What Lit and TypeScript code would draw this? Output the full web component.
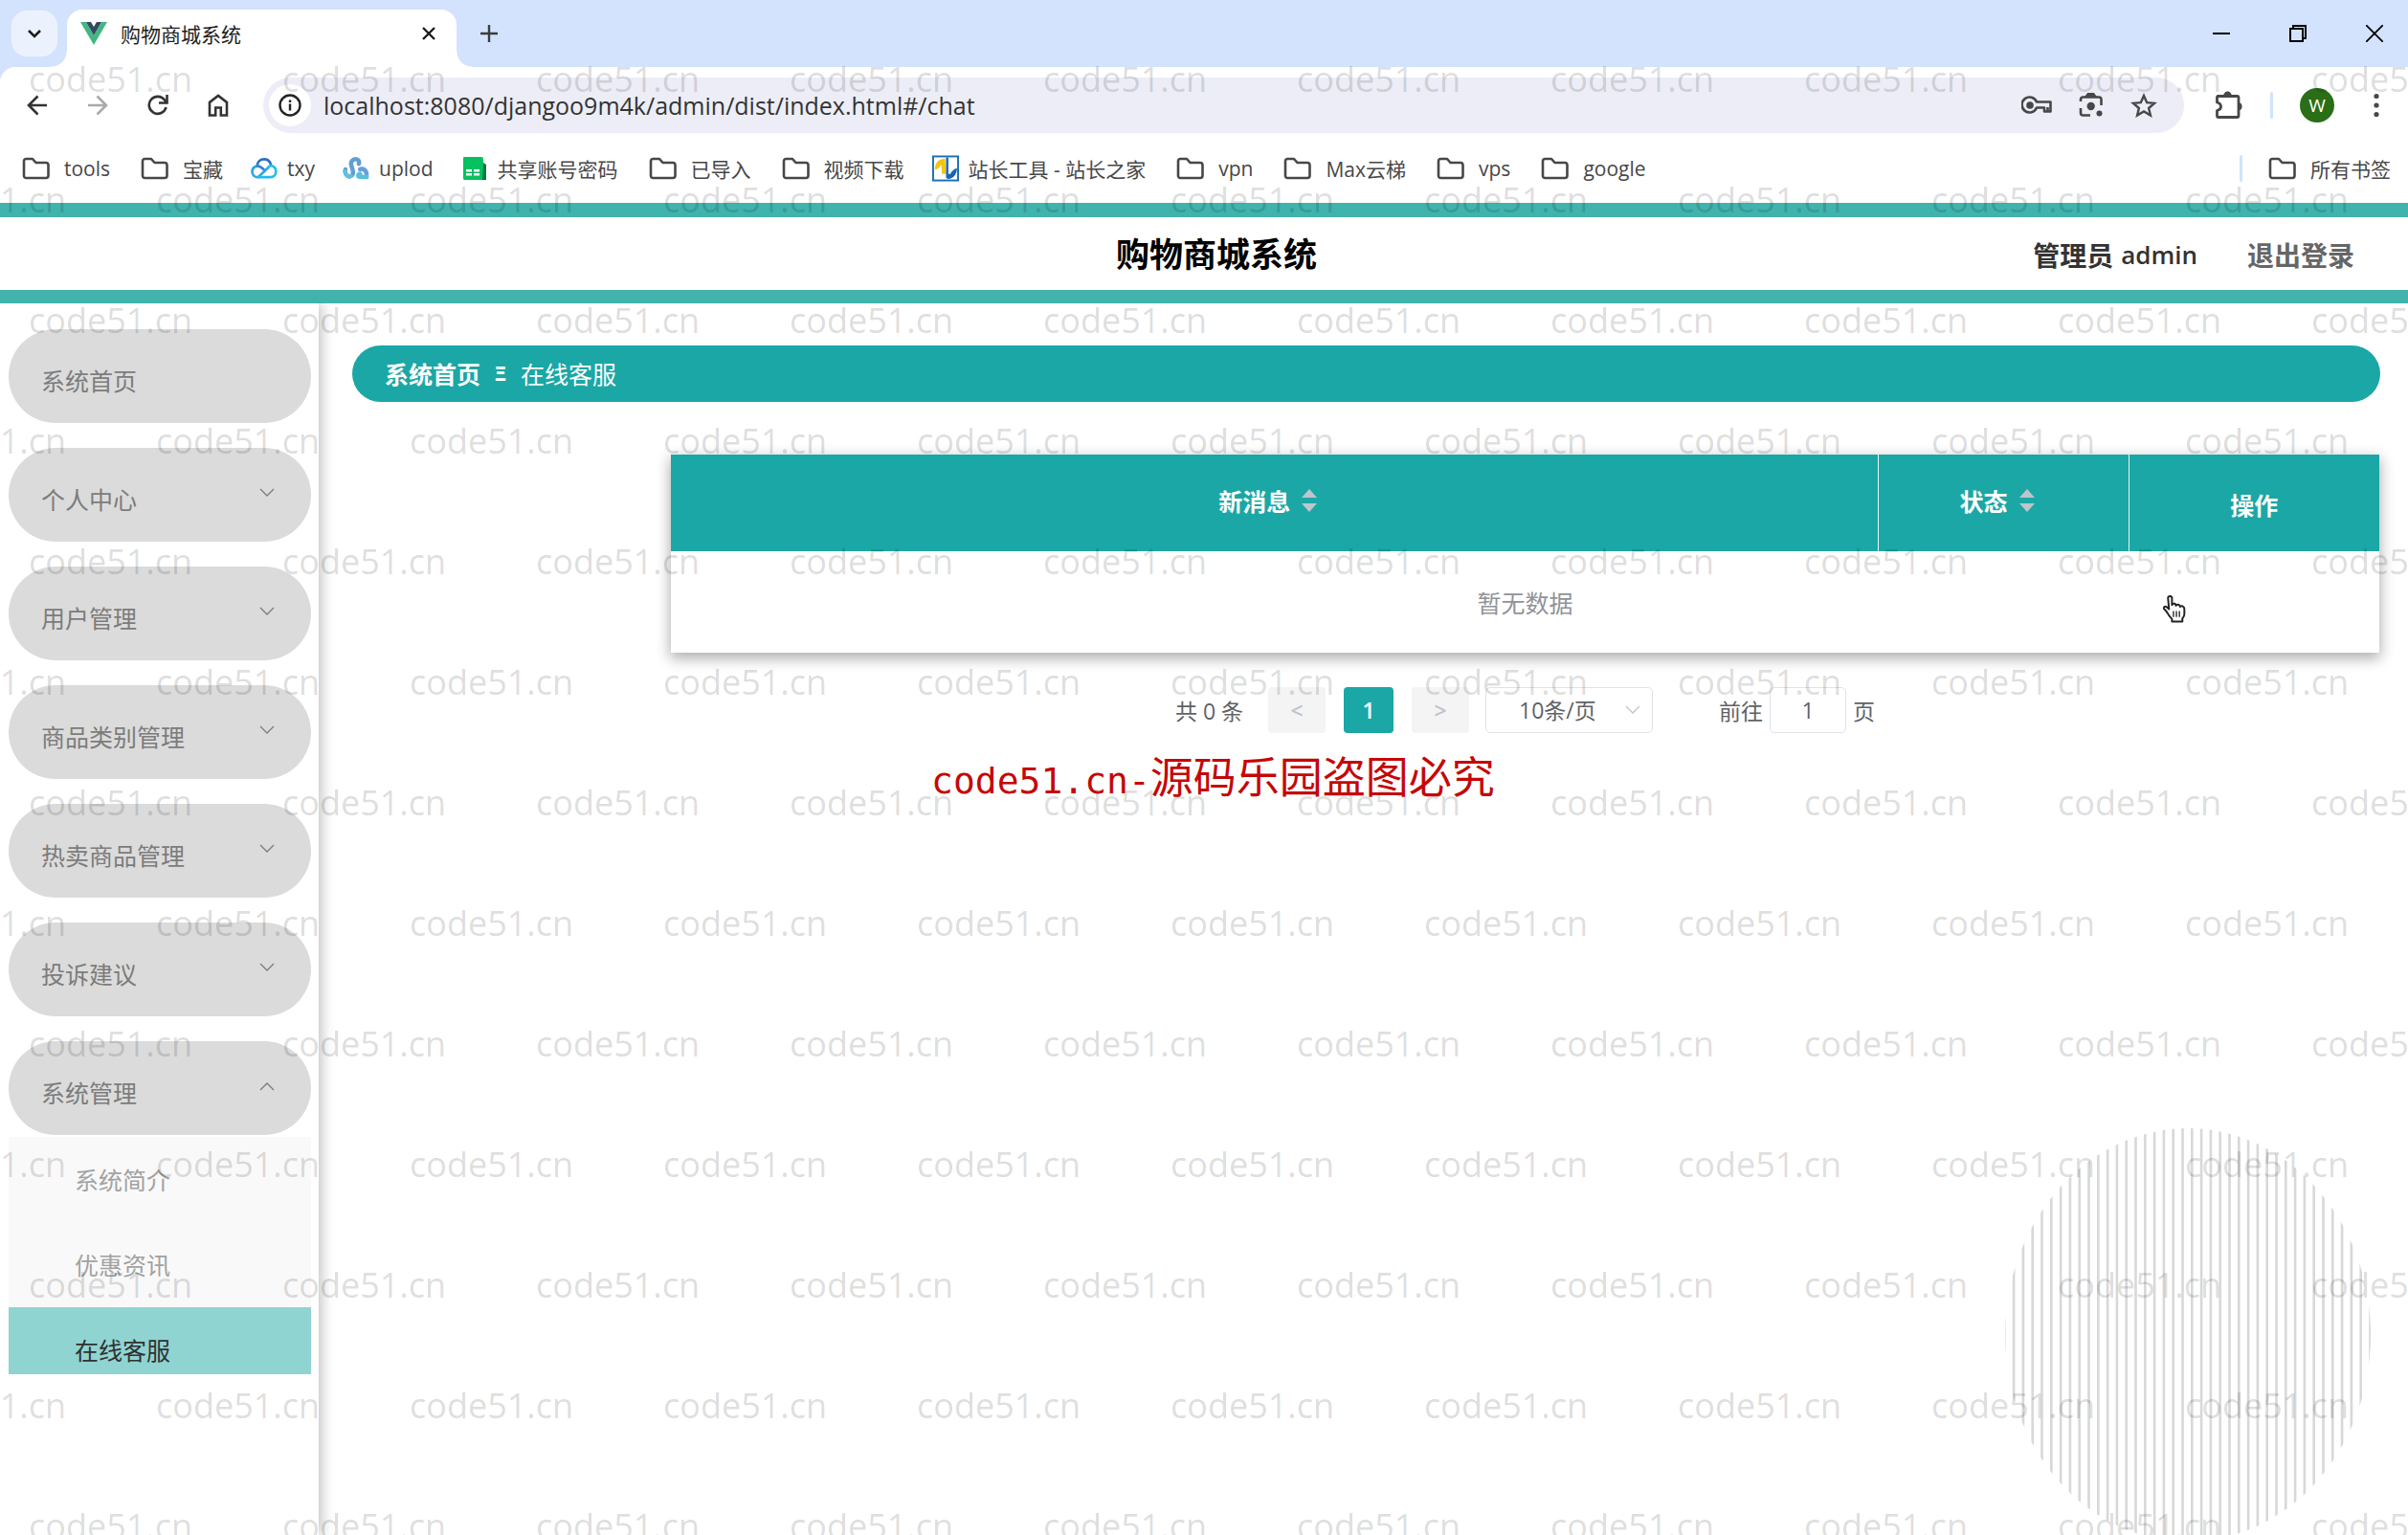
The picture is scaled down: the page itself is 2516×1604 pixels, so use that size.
import { LitElement, html, css, svg, TemplateResult } from "lit";
import { customElement, property } from "lit/decorators.js";

type Bookmark = { label: string; icon: "folder" | "cloud" | "swirl" | "sheet" | "zz" };
type MenuEntry = { label: string; state: "none" | "closed" | "open"; children?: string[] };

const BOOKMARKS: Bookmark[] = [
  { label: "tools", icon: "folder" },
  { label: "宝藏", icon: "folder" },
  { label: "txy", icon: "cloud" },
  { label: "uplod", icon: "swirl" },
  { label: "共享账号密码", icon: "sheet" },
  { label: "已导入", icon: "folder" },
  { label: "视频下载", icon: "folder" },
  { label: "站长工具 - 站长之家", icon: "zz" },
  { label: "vpn", icon: "folder" },
  { label: "Max云梯", icon: "folder" },
  { label: "vps", icon: "folder" },
  { label: "google", icon: "folder" },
];

const MENU: MenuEntry[] = [
  { label: "系统首页", state: "none" },
  { label: "个人中心", state: "closed" },
  { label: "用户管理", state: "closed" },
  { label: "商品类别管理", state: "closed" },
  { label: "热卖商品管理", state: "closed" },
  { label: "投诉建议", state: "closed" },
  { label: "系统管理", state: "open", children: ["系统简介", "优惠资讯", "在线客服"] },
];

const ICONS: Record<string, TemplateResult> = {
  folder: html`<svg width="30" height="24" viewBox="0 0 30 24" fill="none" stroke="#474747" stroke-width="2.6" stroke-linejoin="round"><path d="M2 4.5Q2 2 4.5 2H11l3.500 4H25Q27.500 6 27.500 8.500V19.500Q27.500 22 25 22H4.500Q2 22 2 19.500Z"/></svg>`,
  cloud: html`<svg width="28" height="24" viewBox="0 0 29 24" fill="none" stroke-width="2.800" stroke-linecap="round"><path d="M7 9.500C7 4.500 10.500 2 14.500 2C18 2 20.500 4 21.500 7" stroke="#2a6fc4"/><path d="M7 9.500C3.500 10 1.600 12.500 1.600 15.500C1.600 19 4 21.500 8 21.500L19 11" stroke="#31a6e8"/><path d="M7 9.500C10 9 12 11 14 13" stroke="#2c86d6"/><path d="M8 21.500H21C25 21.500 27.300 18.500 27.300 15C27.300 11.500 24.500 9 21.500 9C20.500 9 19.500 10 19 11" stroke="#22bdf0"/></svg>`,
  swirl: html`<svg width="28" height="26" viewBox="0 0 29 26" fill="none" stroke-width="4.600" stroke-linecap="round"><path d="M3 14C2 19 5 22.500 8.500 21.500C13 20 11 14 9.500 10C8 5.500 11 3 14 3C17 3 18.500 5.500 17.500 8" stroke="#5f9fd0"/><path d="M2.600 16C3.500 20.500 6 22.500 9 21.300" stroke="#63bfe0"/><path d="M19 14C23 12.500 26.500 16 26 22H18C16 22 16.500 19 19 19" stroke="#58bfdc"/><path d="M19 14C22 13 25 14.500 25.800 18" stroke="#6aa0d8"/></svg>`,
  sheet: html`<svg width="28" height="26" viewBox="-1 0 28 26"><path d="M2 1H20Q22 1 22 3V25H2Q1 25 1 23V2Q1 1 2 1Z" fill="#05c160"/><path d="M22 7L25 9V25H21Z" fill="#0a7a40"/><path d="M4 14h6v2.500H4zM12 14h6v2.500h-6zM4 18h6v2.500H4zM12 18h6v2.500h-6z" fill="#fff"/></svg>`,
  zz: html`<svg width="28" height="28" viewBox="0 0 29 28"><rect x="1" y="1" width="27" height="26" fill="#fff" stroke="#1c6fb0" stroke-width="2"/><path d="M3 13Q4 4 14 3.500L15 20H10.500L10 10Q6 15 3 15.500Z" fill="#f3c412"/><path d="M15 2V24Q17 26 20 25Q26 23 27 14Q23 14 19.500 20L17.500 20V2Z" fill="#1668b4"/></svg>`,
  back: html`<svg width="22" height="22" viewBox="0 0 22 22" fill="none" stroke="#333" stroke-width="2.600"><path d="M21 11H3M11.500 1.500L2 11L11.500 20.500"/></svg>`,
  forward: html`<svg width="22" height="22" viewBox="0 0 22 22" fill="none" stroke="#a9a9a9" stroke-width="2.600"><path d="M1 11H19M10.500 1.500L20 11L10.500 20.500"/></svg>`,
  reload: html`<svg width="22" height="22" viewBox="0 0 22 22" fill="none" stroke="#333" stroke-width="2.600"><path d="M19.500 13A9 9 0 1 1 18 5.500L20 8"/><path d="M20.500 0V8.500H12"/></svg>`,
  home: html`<svg width="22" height="24" viewBox="0 0 22 24" fill="none" stroke="#333" stroke-width="2.600"><path d="M2 22.500V9L11 2L20 9V22.500H13.800V14.500H8.200V22.500Z"/></svg>`,
  info: html`<svg width="24" height="24" viewBox="0 0 24 24" fill="none" stroke="#222" stroke-width="2.400"><circle cx="12" cy="12" r="10.500"/><path d="M12 10.500V17.500M12 6.500V9"/></svg>`,
  key: html`<svg width="32" height="20" viewBox="0 0 32 20" fill="none" stroke="#474747" stroke-width="2.600"><path d="M16 6.500H30.500V16.500H24V12.500H16A8 8 0 1 1 16 6.500Z" stroke-linejoin="round"/><circle cx="9" cy="10" r="3.800" fill="#474747" stroke="none"/><path d="M27.500 12V16"/></svg>`,
  lens: html`<svg width="26" height="26" viewBox="0 0 26 26" fill="none" stroke="#474747" stroke-width="2.600"><path d="M2 9V7Q2 4.500 4.500 4.500H21Q23.500 4.500 23.500 7V13M2 16V21Q2 23.500 4.500 23.500H12"/><path d="M8.500 3L10 1H15L16.500 3Z" fill="#474747"/><circle cx="12.700" cy="14" r="4.200" fill="#474747" stroke="none"/><circle cx="21.500" cy="21.500" r="3" fill="#474747" stroke="none"/></svg>`,
  star: html`<svg width="28" height="26" viewBox="0 0 28 26" fill="none" stroke="#474747" stroke-width="2.400"><path d="M14 3L17.200 10.200L25 10.900L19.100 16L20.900 23.500L14 19.500L7.100 23.500L8.900 16L3 10.900L10.800 10.200Z"/></svg>`,
  puzzle: html`<svg width="30" height="30" viewBox="0 0 30 30" fill="none" stroke="#474747" stroke-width="2.800" stroke-linejoin="round"><path d="M2.500 5.500H23.500Q25 5.500 25 7V26Q25 27.500 23.500 27.500H4Q2.500 27.500 2.500 26V20.500Q6.500 19.500 6.500 16.500Q6.500 13 2.500 12V7Q2.500 5.500 4 5.500"/><path d="M10.500 5A3 3 0 0 1 16.500 5Z" fill="#474747"/><path d="M25.500 13.500A3 3 0 0 1 25.500 19Z" fill="#474747"/></svg>`,
  dots: html`<svg width="6" height="26" viewBox="0 0 6 26" fill="#474747"><circle cx="3" cy="3.500" r="2.600"/><circle cx="3" cy="13" r="2.600"/><circle cx="3" cy="22.500" r="2.600"/></svg>`,
  vue: html`<svg width="28" height="24" viewBox="0 0 28 24"><path d="M0 0H6L14 14L22 0H28L14 24Z" fill="#41b883"/><path d="M6 0H11L14 5L17 0H22L14 14Z" fill="#35495e"/></svg>`,
  close: html`<svg width="14" height="14" viewBox="0 0 14 14" fill="none" stroke="#1c1c1c" stroke-width="2.400"><path d="M1 1L13 13M13 1L1 13"/></svg>`,
  plus: html`<svg width="18" height="18" viewBox="0 0 18 18" fill="none" stroke="#3c3c3c" stroke-width="2.400"><path d="M9 0V18M0 9H18"/></svg>`,
  tabs: html`<svg width="16" height="10" viewBox="0 0 16 10" fill="none" stroke="#1c1c1c" stroke-width="2.600"><path d="M2 2L8 8L14 2"/></svg>`,
  minimize: html`<svg width="18" height="18" viewBox="0 0 18 18" stroke="#000" stroke-width="2"><path d="M0 9H18"/></svg>`,
  restore: html`<svg width="18" height="18" viewBox="0 0 18 18" fill="none" stroke="#000" stroke-width="2"><path d="M1 4H14V17H1ZM4 4V1H17V14H14"/></svg>`,
  exit: html`<svg width="18" height="18" viewBox="0 0 18 18" fill="none" stroke="#000" stroke-width="1.800"><path d="M0 0L18 18M18 0L0 18"/></svg>`,
  down: html`<svg width="16" height="10" viewBox="0 0 16 10" fill="none" stroke="currentColor" stroke-width="1.300"><path d="M1 1L8 8L15 1"/></svg>`,
  up: html`<svg width="16" height="10" viewBox="0 0 16 10" fill="none" stroke="currentColor" stroke-width="1.300"><path d="M1 9L8 2L15 9"/></svg>`,
  sort: html`<svg width="16" height="24" viewBox="0 0 16 24" fill="#c0c4cc"><path d="M0 9L8 0L16 9ZM0 15H16L8 24Z"/></svg>`,
  hand: html`<svg width="27" height="29" viewBox="0 0 26 28" fill="#fff" stroke="#222" stroke-width="1.900" stroke-linejoin="round"><path d="M6 3Q6 1 8 1Q10 1 10 3V10Q10.500 8 12.500 8.500Q14 9 14 10.500Q15 9 17 9.700Q18.200 10.200 18.200 11.500Q19.500 10.500 21 11.300Q22.500 12 22.500 14V19Q22.500 21 20.500 23.500V26.500H10V24Q7 21 5.500 18Q4 15.500 1.800 13.500Q1.500 11 4 11.500Q5.500 12.500 7 14Z"/><path d="M11.500 16V22M14.500 16V22M17.500 16V22" fill="none" stroke-width="1.300"/></svg>`,
};

const FONT = css`
  button, input, select, a { font: inherit; color: inherit; }
  button { border: 0; padding: 0; background: none; cursor: pointer; }
  a { text-decoration: none; }
  svg { display: block; flex: none; }
`;

@customElement("browser-chrome")
export class BrowserChrome extends LitElement {
  static styles = [FONT, css`
    :host { display: block; background: #d3e3fd; }
    .tabs { display: flex; height: 70px; align-items: center; padding-left: 12px; }
    .search { display: flex; align-items: center; justify-content: center; width: 48px; height: 48px; border-radius: 16px; background: #ecf2fd; }
    .tab { position: relative; display: flex; align-items: center; align-self: flex-end; box-sizing: border-box; width: 407px; height: 60px; margin-left: 10px; padding: 0 22px 11px 14px; border-radius: 16px 16px 0 0; background: #fff; color: #1f1f1f; font-size: 21px; }
    .tab::before, .tab::after { content: ""; position: absolute; bottom: 0; width: 16px; height: 16px; }
    .tab::before { right: 100%; background: radial-gradient(circle at 0 0, #d3e3fd 15px, #fff 16px); }
    .tab::after { left: 100%; background: radial-gradient(circle at 100% 0, #d3e3fd 15px, #fff 16px); }
    .name { flex: 1; margin-left: 14px; }
    .plus { margin-left: 25px; }
    .window { display: flex; gap: 62px; margin-left: auto; padding-right: 26px; }
    .toolbar { display: flex; align-items: center; box-sizing: border-box; height: 80px; padding: 0 30px 0 28px; border-radius: 16px 0 0 0; background: #fff; }
    .nav { display: flex; align-items: center; gap: 41px; margin-right: 36px; }
    .address { display: flex; flex: 1; align-items: center; box-sizing: border-box; height: 58px; padding: 0 28px 0 6px; border-radius: 29px; background: #ecedf6; }
    .info { display: flex; align-items: center; justify-content: center; width: 44px; height: 44px; border-radius: 50%; background: #fff; }
    .url { flex: 1; min-width: 0; margin-left: 13px; padding: 0; border: 0; outline: 0; background: none; color: #333; font-size: 25px; }
    .actions { display: flex; align-items: center; gap: 28px; }
    .puzzle { margin-left: 32px; }
    .line { width: 3px; height: 28px; margin: 0 28px; border-radius: 2px; background: #cfe3fb; }
    .avatar { display: flex; align-items: center; justify-content: center; width: 36px; height: 36px; margin-right: 41px; border-radius: 50%; background: #2a6e17; color: #fff; font-size: 19px; }
    .marks { display: flex; align-items: center; box-sizing: border-box; height: 62px; padding: 0 18px 10px 20px; background: #fff; color: #474747; font-size: 21px; white-space: nowrap; }
    .mark { display: flex; align-items: center; gap: 10px; margin-right: 29px; }
    .folder { gap: 14px; padding-left: 3px; }
    .marks .line { margin: 0 24px 0 auto; }
    .all { margin-right: 0; }
  `];
  render() {
    return html`
      <div class="tabs">
        <button class="search" aria-label="搜索标签页">${ICONS.tabs}</button>
        <div class="tab">${ICONS.vue}<span class="name">购物商城系统</span><button aria-label="关闭标签页">${ICONS.close}</button></div>
        <button class="plus" aria-label="新标签页">${ICONS.plus}</button>
        <div class="window">
          <button aria-label="最小化">${ICONS.minimize}</button>
          <button aria-label="还原">${ICONS.restore}</button>
          <button aria-label="关闭">${ICONS.exit}</button>
        </div>
      </div>
      <div class="toolbar">
        <div class="nav">
          <button aria-label="后退">${ICONS.back}</button>
          <button aria-label="前进">${ICONS.forward}</button>
          <button aria-label="刷新">${ICONS.reload}</button>
          <button aria-label="主页">${ICONS.home}</button>
        </div>
        <div class="address">
          <button class="info" aria-label="网站信息">${ICONS.info}</button>
          <input class="url" aria-label="地址" .value=${"localhost:8080/djangoo9m4k/admin/dist/index.html#/chat"}>
          <div class="actions">
            <button aria-label="密码">${ICONS.key}</button>
            <button aria-label="智能镜头">${ICONS.lens}</button>
            <button aria-label="收藏">${ICONS.star}</button>
          </div>
        </div>
        <button class="puzzle" aria-label="扩展程序">${ICONS.puzzle}</button>
        <span class="line"></span>
        <button class="avatar">W</button>
        <button aria-label="菜单">${ICONS.dots}</button>
      </div>
      <nav class="marks" aria-label="书签">
        ${BOOKMARKS.map((b) => html`<a class="mark ${b.icon}" href="#">${ICONS[b.icon]}<span>${b.label}</span></a>`)}
        <span class="line"></span>
        <a class="mark folder all" href="#">${ICONS.folder}<span>所有书签</span></a>
      </nav>`;
  }
}

@customElement("side-menu")
export class SideMenu extends LitElement {
  static styles = [FONT, css`
    :host { display: block; box-sizing: border-box; width: 333px; padding: 27px 8px 0 9px; background: #fff; box-shadow: 2px 0 14px rgba(0, 0, 0, 0.28); font-size: 25px; }
    ul { display: flex; flex-direction: column; gap: 26px; margin: 0; padding: 0; list-style: none; }
    .entry { display: flex; justify-content: space-between; align-items: center; box-sizing: border-box; width: 100%; height: 98px; padding: 8px 38px 0 34px; border-radius: 49px; background: #dbdbdb; color: #7c7c7c; }
    .entry svg { margin-bottom: 12px; }
    .sub { gap: 19px; margin-top: 2px; background: #f9f9f9; }
    .leaf { display: flex; align-items: center; box-sizing: border-box; height: 70px; padding: 18px 0 0 69px; color: #a2a2a2; }
    .active { background: #8fd4d1; color: #303133; }
  `];
  render() {
    return html`<nav><ul>
      ${MENU.map((m) => html`<li>
        <button class="entry"><span>${m.label}</span>${m.state === "none" ? "" : m.state === "open" ? ICONS.up : ICONS.down}</button>
        ${m.children ? html`<ul class="sub">${m.children.map((c, i) => html`<li><a href="#" class="leaf ${i === 2 ? "active" : ""}">${c}</a></li>`)}</ul>` : ""}
      </li>`)}
    </ul></nav>`;
  }
}

@customElement("chat-panel")
export class ChatPanel extends LitElement {
  static styles = [FONT, css`
    :host { display: flex; flex: 1; flex-direction: column; min-width: 0; box-sizing: border-box; padding: 44px 29px 0 35px; font-size: 25px; }
    .crumbs { display: flex; align-items: center; box-sizing: border-box; height: 59px; padding: 0 34px 2px; border-radius: 30px; background: #1ba7a5; color: #fff; }
    .crumbs a { font-weight: 700; }
    .crumbs i { margin: 0 15px; font-style: normal; font-weight: 700; font-size: 21px; }
    .board { display: flex; flex-direction: column; align-items: stretch; margin: 55px 1px 0 333px; }
    table { width: 100%; table-layout: fixed; border-collapse: collapse; background: #fff; box-shadow: 0 5px 14px 1px rgba(0, 0, 0, 0.32); }
    col.narrow { width: 262px; }
    th { height: 101px; padding: 0; border-right: 1px solid #e6f6f5; background: #1ba7a5; color: #fff; font-weight: 700; box-sizing: border-box; }
    th:last-child { border-right: 0; padding-top: 2px; }
    .sort { display: flex; align-items: center; justify-content: center; box-sizing: border-box; gap: 12px; width: 100%; padding: 0 13px 6px 0; }
    td { height: 106px; padding: 0; box-sizing: border-box; text-align: center; color: #909399; }
    .pager { display: flex; align-items: center; justify-content: center; margin-top: 36px; color: #606266; font-size: 23px; white-space: nowrap; }
    .step, .page { height: 48px; border-radius: 4px; font-weight: 600; }
    .step { width: 60px; background: #f4f4f5; color: #c0c4cc; }
    .page { width: 52px; margin: 0 19px; background: #1ba7a5; color: #fff; }
    .total { margin-right: 26px; }
    .size { display: flex; align-items: center; margin: 0 69px 0 17px; }
    .size select, .jump input { box-sizing: border-box; height: 48px; border: 1px solid #e0e2e8; border-radius: 5px; background: #fff; outline: 0; }
    .size select { width: 175px; padding: 0 0 0 34px; appearance: none; }
    .size svg { margin-left: -29px; margin-right: 13px; color: #c0c4cc; }
    .jump { display: flex; align-items: center; gap: 7px; }
    .jump input { width: 80px; padding: 0; text-align: center; }
  `];
  render() {
    return html`
      <nav class="crumbs"><a href="#">系统首页</a><i>Ξ</i><span>在线客服</span></nav>
      <section class="board">
        <table>
          <colgroup><col><col class="narrow"><col class="narrow"></colgroup>
          <thead><tr>
            <th><button class="sort">新消息${ICONS.sort}</button></th>
            <th><button class="sort">状态${ICONS.sort}</button></th>
            <th>操作</th>
          </tr></thead>
          <tbody><tr><td colspan="3">暂无数据</td></tr></tbody>
        </table>
        <div class="pager">
          <span class="total">共 0 条</span>
          <button class="step" disabled>&lt;</button>
          <button class="page">1</button>
          <button class="step" disabled>&gt;</button>
          <span class="size"><select aria-label="每页条数"><option>10条/页</option></select>${ICONS.down}</span>
          <label class="jump">前往<input type="text" value="1">页</label>
        </div>
      </section>`;
  }
}

@customElement("striped-disc")
export class StripedDisc extends LitElement {
  static styles = css`:host { display: block; } svg { display: block; }`;
  @property({ type: Number }) lines = 40;
  render() {
    const xs = Array.from({ length: this.lines }, (_, i) => 1 + i * 9.8);
    return html`<svg width="388" height="436" viewBox="0 0 388 436">
      <defs><clipPath id="disc"><ellipse cx="194" cy="219" rx="191" ry="216"/></clipPath></defs>
      <g clip-path="url(#disc)" fill="#d8d8d8">${xs.map((x) => svg`<rect x=${x} y="0" width="2.600" height="436"/>`)}</g>
    </svg>`;
  }
}

@customElement("water-mark")
export class WaterMark extends LitElement {
  static styles = css`
    :host { display: block; overflow: hidden; pointer-events: none; color: rgba(0, 0, 0, 0.15); font-size: 36px; line-height: 126px; }
    .row { display: flex; margin-left: 30px; }
    .row:nth-child(even) { margin-left: -102px; }
    span { flex: none; width: 265px; }
  `;
  render() {
    const cells = Array.from({ length: 10 });
    return html`${Array.from({ length: 13 }).map(() => html`<div class="row">${cells.map(() => html`<span>code51.cn</span>`)}</div>`)}`;
  }
}

@customElement("app-root")
export class AppRoot extends LitElement {
  static styles = [FONT, css`
    :host { display: flex; flex-direction: column; position: relative; min-height: 100vh; overflow: hidden; background: #fff; font-family: "Open Sans", "Noto Sans CJK SC", sans-serif; }
    header { position: relative; z-index: 1; display: grid; grid-template-columns: 1fr auto 1fr; align-items: center; box-sizing: border-box; height: 105px; padding: 2px 0 0 26px; border-top: 15px solid #40b3ad; border-bottom: 14px solid #40b3ad; background: #fff; }
    h1 { grid-column: 2; margin: 0; font-size: 35px; line-height: 48px; color: #000; }
    .user { display: flex; align-items: center; justify-content: flex-end; gap: 52px; padding-right: 56px; color: #333; font-size: 28px; font-weight: 700; }
    .who { display: flex; align-items: center; gap: 8px; }
    .who span { font-size: 26px; font-weight: 600; }
    .user button { color: #666; }
    main { display: flex; flex: 1; }
    side-menu { flex: none; }
    striped-disc { position: absolute; right: 36px; bottom: -8px; }
    water-mark { position: absolute; inset: 20px 0 0 0; z-index: 3; }
    .notice { position: absolute; left: 973px; top: 784px; z-index: 4; display: flex; align-items: baseline; margin: 0; color: #c40808; font-size: 45px; line-height: 56px; white-space: nowrap; }
    .notice span { font-family: "DejaVu Sans Mono", monospace; font-size: 38px; }
    .pointer { position: absolute; left: 2259px; top: 622px; z-index: 4; }
  `];
  render() {
    return html`
      <browser-chrome></browser-chrome>
      <header>
        <h1>购物商城系统</h1>
        <div class="user"><div class="who">管理员<span>admin</span></div><button>退出登录</button></div>
      </header>
      <striped-disc></striped-disc>
      <main><side-menu></side-menu><chat-panel></chat-panel></main>
      <water-mark aria-hidden="true"></water-mark>
      <p class="notice"><span>code51.cn-</span>源码乐园盗图必究</p>
      <div class="pointer">${ICONS.hand}</div>`;
  }
}
